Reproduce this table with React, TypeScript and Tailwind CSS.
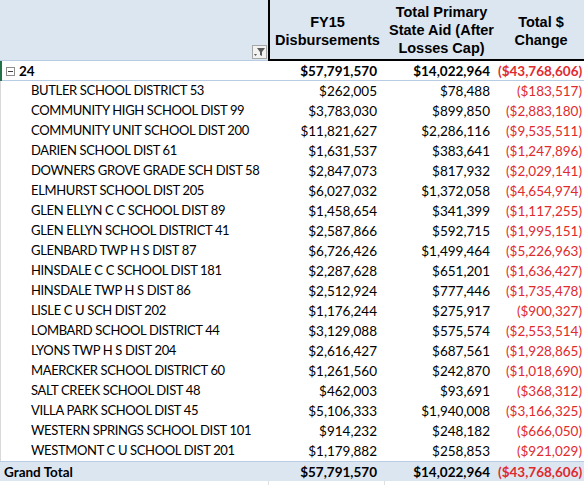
const rows: [string, string, string, string][] = [
  ["BUTLER SCHOOL DISTRICT 53", "$262,005", "$78,488", "($183,517)"],
  ["COMMUNITY HIGH SCHOOL DIST 99", "$3,783,030", "$899,850", "($2,883,180)"],
  ["COMMUNITY UNIT SCHOOL DIST 200", "$11,821,627", "$2,286,116", "($9,535,511)"],
  ["DARIEN SCHOOL DIST 61", "$1,631,537", "$383,641", "($1,247,896)"],
  ["DOWNERS GROVE GRADE SCH DIST 58", "$2,847,073", "$817,932", "($2,029,141)"],
  ["ELMHURST SCHOOL DIST 205", "$6,027,032", "$1,372,058", "($4,654,974)"],
  ["GLEN ELLYN C C SCHOOL DIST 89", "$1,458,654", "$341,399", "($1,117,255)"],
  ["GLEN ELLYN SCHOOL DISTRICT 41", "$2,587,866", "$592,715", "($1,995,151)"],
  ["GLENBARD TWP H S DIST 87", "$6,726,426", "$1,499,464", "($5,226,963)"],
  ["HINSDALE C C SCHOOL DIST 181", "$2,287,628", "$651,201", "($1,636,427)"],
  ["HINSDALE TWP H S DIST 86", "$2,512,924", "$777,446", "($1,735,478)"],
  ["LISLE C U SCH DIST 202", "$1,176,244", "$275,917", "($900,327)"],
  ["LOMBARD SCHOOL DISTRICT 44", "$3,129,088", "$575,574", "($2,553,514)"],
  ["LYONS TWP H S DIST 204", "$2,616,427", "$687,561", "($1,928,865)"],
  ["MAERCKER SCHOOL DISTRICT 60", "$1,261,560", "$242,870", "($1,018,690)"],
  ["SALT CREEK SCHOOL DIST 48", "$462,003", "$93,691", "($368,312)"],
  ["VILLA PARK SCHOOL DIST 45", "$5,106,333", "$1,940,008", "($3,166,325)"],
  ["WESTERN SPRINGS SCHOOL DIST 101", "$914,232", "$248,182", "($666,050)"],
  ["WESTMONT C U SCHOOL DIST 201", "$1,179,882", "$258,853", "($921,029)"],
];

function FilterButton() {
  return (
    <div className="w-[15px] h-[14px] mb-[1px] mr-[1px] border border-[#a6a6a6] bg-[#f2f2f2] flex items-center justify-center">
      <svg width="13" height="12" viewBox="0 0 13 12">
        <path d="M4 2h8l-3 4v4l-2-1V6z" fill="#595959" />
        <path d="M1 8h3l-1.5 2z" fill="#595959" />
      </svg>
    </div>
  );
}

function Totals({ a, b, c }: { a: string; b: string; c: string }) {
  return (
    <>
      <div className="text-right pr-[8px] font-bold">{a}</div>
      <div className="text-right pr-[8px] font-bold">{b}</div>
      <div className="text-right pr-[2px] font-bold text-[#df2a2e]">{c}</div>
    </>
  );
}

export default function App() {
  return (
    <div className="w-[584px] h-[485px] bg-white overflow-hidden text-[13.5px] text-black font-['Lato',sans-serif]">
      <div className="flex h-[61px] bg-[#dce6f1]">
        <div className="w-[268px] border-b border-[#b8cce4] flex items-end justify-end">
          <FilterButton />
        </div>
        <div className="flex-1 flex border-l-2 border-b-2 border-black font-['Liberation_Sans',sans-serif] font-bold text-[14.5px] leading-[18px] text-center">
          <div className="w-[115px] flex items-center justify-center pt-[2px]">
            FY15
            <br />
            Disbursements
          </div>
          <div className="w-[113px] flex items-center justify-center">
            Total Primary State Aid (After Losses Cap)
          </div>
          <div className="flex-1 flex items-center justify-center pt-[2px]">
            Total $
            <br />
            Change
          </div>
        </div>
      </div>

      <div className="grid grid-cols-[270px_115px_113px_86px] h-[20px] items-center border-b border-[#b8cce4]">
        <div className="flex items-center h-full border-l-2 border-[#217346]">
          <span className="w-[9px] h-[9px] ml-[4px] mr-[4px] border border-[#8c8c8c] flex items-center justify-center">
            <span className="w-[5px] h-px bg-[#404040]" />
          </span>
          <span className="font-bold">24</span>
        </div>
        <Totals a="$57,791,570" b="$14,022,964" c="($43,768,606)" />
      </div>

      <div className="border-l border-[#d9d9d9]">
        {rows.map(([name, fy, aid, change]) => (
          <div key={name} className="grid grid-cols-[269px_115px_113px_86px] h-[20px] items-center">
            <div className="pl-[30px] whitespace-nowrap text-[13px] tracking-[-0.35px]">{name}</div>
            <div className="text-right pr-[8px]">{fy}</div>
            <div className="text-right pr-[8px]">{aid}</div>
            <div className="text-right pr-[2px] text-[#df2a2e]">{change}</div>
          </div>
        ))}
      </div>

      <div className="grid grid-cols-[270px_115px_113px_86px] h-[20px] items-center bg-[#dce6f1] border-t border-[#b8cce4]">
        <div className="pl-[4px] font-bold">Grand Total</div>
        <Totals a="$57,791,570" b="$14,022,964" c="($43,768,606)" />
      </div>

      <div className="grid grid-cols-[269px_116px_113px_86px] h-[4px]">
        <div className="border-r border-[#e0e0e0]" />
        <div className="border-r border-[#e0e0e0]" />
        <div />
        <div />
      </div>
    </div>
  );
}
